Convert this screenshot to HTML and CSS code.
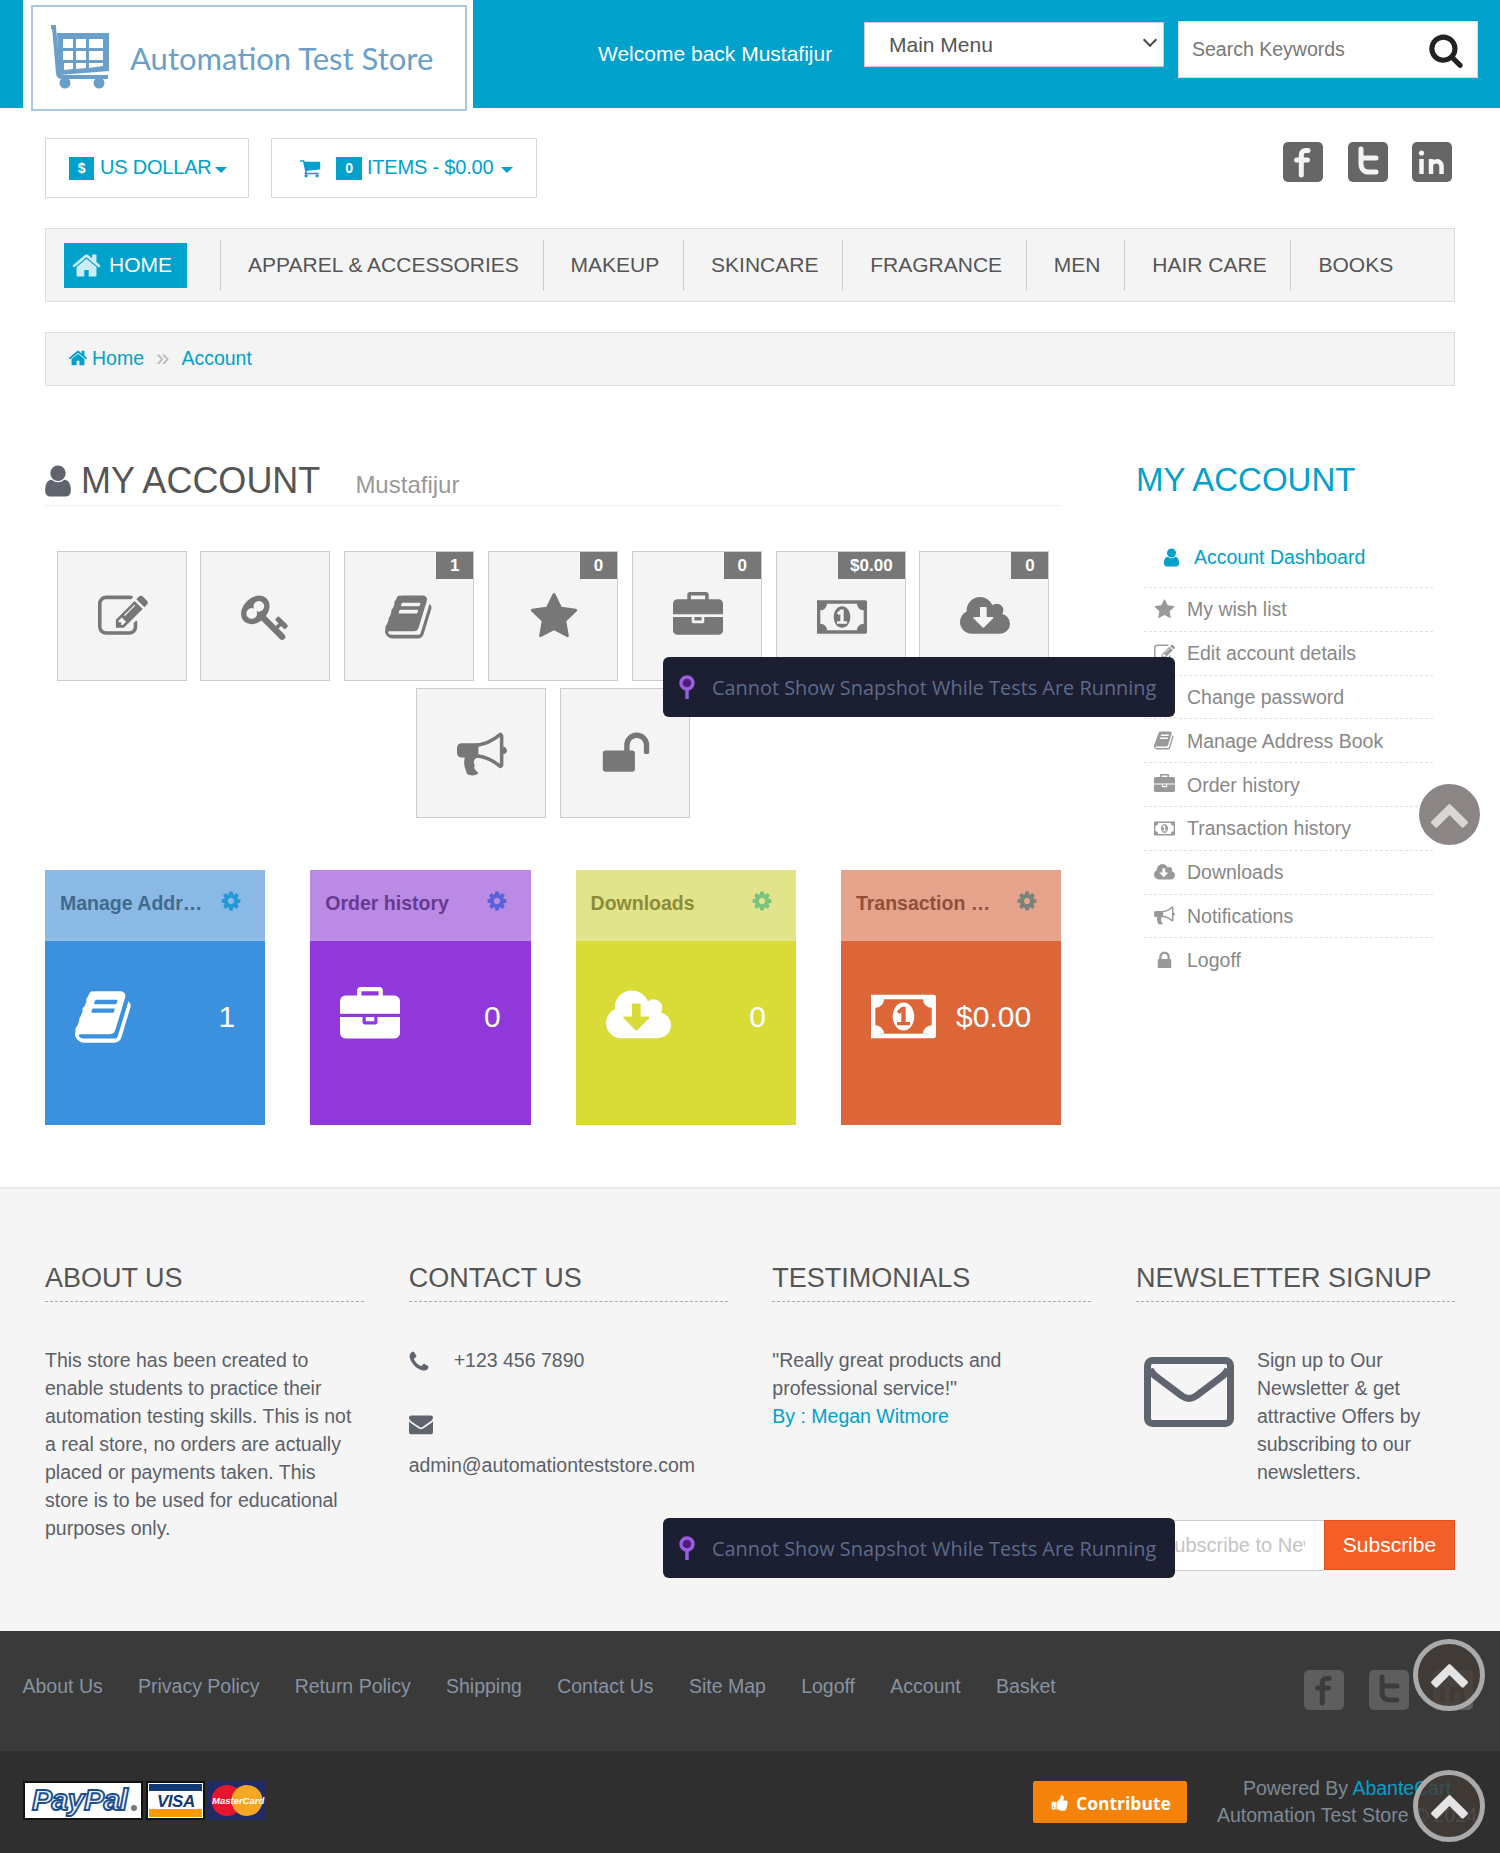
FILE: index.html
```html
<!DOCTYPE html>
<html lang="en">
<head>
<meta charset="utf-8">
<title>My Account</title>
<link rel="stylesheet" href="styles.css">
</head>
<body>
<svg class="defs" aria-hidden="true">
  <symbol id="i-star" viewBox="0 0 1792 1792"><path d="M1728 647q0 22-26 48l-363 354 86 500q1 7 1 20 0 21-10.500 35.500t-30.500 14.500q-19 0-40-12l-449-236-449 236q-22 12-40 12-21 0-31.500-14.500t-10.500-35.500q0-6 2-20l86-500-364-354q-25-27-25-48 0-37 56-46l502-73 225-455q19-41 49-41t49 41l225 455 502 73q56 9 56 46z"/></symbol>
  <symbol id="i-user" viewBox="0 0 1792 1792"><path d="M1536 1399q0 109-62.500 187t-150.500 78h-854q-88 0-150.500-78t-62.500-187q0-85 8.500-160.500t31.500-152 58.500-131 94-89 134.500-34.500q131 128 313 128t313-128q76 0 134.500 34.500t94 89 58.500 131 31.500 152 8.500 160.500zm-256-887q0 159-112.500 271.500t-271.500 112.500-271.500-112.500-112.500-271.500 112.500-271.500 271.500-112.500 271.500 112.500 112.500 271.500z"/></symbol>
  <symbol id="i-home" viewBox="0 0 1792 1792"><path d="M1472 992v480q0 26-19 45t-45 19h-384v-384h-256v384h-384q-26 0-45-19t-19-45v-480q0-1 .5-3t.5-3l575-474 575 474q1 2 1 6zm223-69l-62 74q-8 9-21 11h-3q-13 0-21-7l-692-577-692 577q-12 8-24 7-13-2-21-11l-62-74q-8-10-7-23.500t11-21.500l719-599q32-26 76-26t76 26l244 204v-195q0-14 9-23t23-9h192q14 0 23 9t9 23v408l219 182q10 8 11 21.500t-7 23.500z"/></symbol>
  <symbol id="i-search" viewBox="0 0 1792 1792"><path d="M1216 832q0-185-131.500-316.500t-316.500-131.500-316.500 131.500-131.500 316.500 131.500 316.500 316.500 131.500 316.500-131.500 131.500-316.500zm512 832q0 52-38 90t-90 38q-54 0-90-38l-343-342q-179 124-399 124-143 0-273.500-55.500t-225-150-150-225-55.500-273.500 55.500-273.500 150-225 225-150 273.500-55.500 273.500 55.500 225 150 150 225 55.500 273.500q0 220-124 399l343 343q37 37 37 90z"/></symbol>
  <symbol id="i-cart" viewBox="0 0 1792 1792"><path d="M704 1536q0 52-38 90t-90 38-90-38-38-90 38-90 90-38 90 38 38 90zm896 0q0 52-38 90t-90 38-90-38-38-90 38-90 90-38 90 38 38 90zm128-1088v512q0 24-16.500 42.500t-40.500 21.500l-1044 122q13 60 13 70 0 16-24 64h920q26 0 45 19t19 45-19 45-45 19h-1024q-26 0-45-19t-19-45q0-11 8-31.500t16-36 21.500-40 15.500-29.500l-177-823h-204q-26 0-45-19t-19-45 19-45 45-19h256q16 0 28.500 6.500t19.500 15.500 13 24.500 8 26 5.500 29.500 4.500 26h1201q26 0 45 19t19 45z"/></symbol>
  <symbol id="i-cog" viewBox="0 0 1792 1792"><path d="M1152 896q0-106-75-181t-181-75-181 75-75 181 75 181 181 75 181-75 75-181zm512-109v222q0 12-8 23t-20 13l-185 28q-19 54-39 91 35 50 107 138 10 12 10 25t-9 23q-27 37-99 108t-94 71q-12 0-26-9l-138-108q-44 23-91 38-16 136-29 186-7 28-36 28h-222q-14 0-24.500-8.500t-11.500-21.500l-28-184q-49-16-90-37l-141 107q-10 9-25 9-14 0-25-11-126-114-165-168-7-10-7-23 0-12 8-23 15-21 51-66.500t54-70.500q-27-50-41-99l-183-27q-13-2-21-12.500t-8-23.500v-222q0-12 8-23t19-13l186-28q14-46 39-92-40-57-107-138-10-12-10-24 0-10 9-23 26-36 98.500-107.500t94.500-71.500q13 0 26 10l138 107q44-23 91-38 16-136 29-186 7-28 36-28h222q14 0 24.500 8.500t11.500 21.500l28 184q49 16 90 37l142-107q9-9 24-9 13 0 25 10 129 119 165 170 7 8 7 22 0 12-8 23-15 21-51 66.500t-54 70.500q26 50 41 98l183 28q13 2 21 12.500t8 23.500z"/></symbol>
  <symbol id="i-phone" viewBox="0 0 1792 1792"><path d="M1600 1240q0 27-10 70.500t-21 68.500q-21 50-122 106-94 51-186 51-27 0-53-3.500t-57.500-12.500-47-14.500-55.500-20.500-49-18q-98-35-175-83-127-79-264-216t-216-264q-48-77-83-175-3-9-18-49t-20.500-55.500-14.500-47-12.500-57.500-3.500-53q0-92 51-186 56-101 106-122 25-11 68.500-21t70.500-10q14 0 21 3 18 6 53 76 11 19 30 54t35 63.500 31 53.500q3 4 17.500 25t21.500 35.500 7 28.500q0 20-28.500 50t-62 55-62 53-28.500 46q0 9 5 22.500t8.500 20.500 14 24 11.500 19q76 137 174 235t235 174q2 1 19 11.500t24 14 20.500 8.500 22.500 5q18 0 46-28.500t53-62 55-62 50-28.500q14 0 28.500 7t35.500 21.500 25 17.500q25 15 53.500 31t63.500 35 54 30q70 35 76 53 3 7 3 21z"/></symbol>
  <symbol id="i-envelope" viewBox="0 0 1792 1792"><path d="M1792 710v794q0 66-47 113t-113 47h-1472q-66 0-113-47t-47-113v-794q44 49 101 87 362 246 497 345 57 42 92.500 65.500t94.500 48 110 24.500h2q51 0 110-24.500t94.500-48 92.500-65.500q170-123 498-345 57-39 100-87zm0-294q0 79-49 151t-122 123q-376 261-468 325-10 7-42.500 30.500t-54 38-52 32.500-57.500 27-50 9h-2q-23 0-50-9t-57.500-27-52-32.500-54-38-42.500-30.500q-91-64-262-182.500t-205-142.500q-62-42-117-115.500t-55-136.500q0-78 41.500-130t118.500-52h1472q65 0 112.500 47t47.500 113z"/></symbol>
  <symbol id="i-thumb" viewBox="0 0 1792 1792"><path d="M320 1344q0-26-19-45t-45-19q-27 0-45.500 19t-18.500 45q0 27 18.500 45.500t45.500 18.500q26 0 45-18.500t19-45.500zm160-512v640q0 26-19 45t-45 19h-288q-26 0-45-19t-19-45v-640q0-26 19-45t45-19h288q26 0 45 19t19 45zm1184 0q0 86-55 149 15 44 15 76 3 76-43 137 17 56 0 117-15 57-54 94 9 112-49 181-64 76-197 78h-129q-66 0-144-15.500t-121.500-29-120.500-39.500q-123-43-158-44-26-1-45-19.500t-19-44.500v-641q0-25 18-43.500t43-20.500q24-2 76-59t101-121q68-87 101-120 18-18 31-48t17.500-48.500 13.500-60.500q7-39 12.500-61t19.500-52 34-50q19-19 45-19 46 0 82.500 10.500t60 26 40 40.500 24 45 12 50 5 45 .5 39q0 38-9.500 76t-19 60-27.500 56q-3 6-10 18t-11 22-8 24h277q78 0 135 57t57 135z"/></symbol>
  <symbol id="i-lock" viewBox="0 0 1792 1792"><path d="M640 768h512v-192q0-106-75-181t-181-75-181 75-75 181v192zm832 96v576q0 40-28 68t-68 28h-960q-40 0-68-28t-28-68v-576q0-40 28-68t68-28h32v-192q0-184 132-316t316-132 316 132 132 316v192h32q40 0 68 28t28 68z"/></symbol>
  <symbol id="i-unlock" viewBox="0 0 1792 1792"><path d="M1728 576v256q0 26-19 45t-45 19h-64q-26 0-45-19t-19-45v-256q0-106-75-181t-181-75-181 75-75 181v192h96q40 0 68 28t28 68v576q0 40-28 68t-68 28h-960q-40 0-68-28t-28-68v-576q0-40 28-68t68-28h672v-192q0-185 131.500-316.500t316.500-131.500 316.500 131.500 131.500 316.500z"/></symbol>
  <symbol id="i-bullhorn" viewBox="0 0 1792 1792"><path d="M1664 640q53 0 90.500 37.500t37.500 90.500-37.500 90.500-90.500 37.500v384q0 52-38 90t-90 38q-417-347-812-380-58 19-91 66t-31 100.500 40 92.500q-20 33-23 65.500t6 58 33.500 55 48 50 61.500 50.500q-29 58-111.500 83t-168.500 11.500-132-55.500q-7-23-29.500-87.500t-32-94.500-23-89-15-101 3.500-98.500 22-110.500h-122q-66 0-113-47t-47-113v-192q0-66 47-113t113-47h480q435 0 896-384 52 0 90 38t38 90v384zm-128 604v-954q-394 302-768 343v270q377 42 768 341z"/></symbol>
  <symbol id="i-briefcase" viewBox="0 0 1792 1792"><path d="M640 256h512v-128h-512v128zm1152 640v480q0 66-47 113t-113 47h-1472q-66 0-113-47t-47-113v-480h672v160q0 26 19 45t45 19h320q26 0 45-19t19-45v-160h672zm-768 0v128h-256v-128h256zm768-480v384h-1792v-384q0-66 47-113t113-47h352v-160q0-40 28-68t68-28h576q40 0 68 28t28 68v160h352q66 0 113 47t47 113z"/></symbol>
  <symbol id="i-money" viewBox="-64 0 1920 1792"><path d="M704 1152h384v-96h-128v-448h-114l-148 137 77 80q42-37 55-57h2v288h-128v96zm512-256q0 70-21 142t-59.500 134-101.500 101-138 39-138-39-101.500-101-59.500-134-21-142 21-142 59.500-134 101.500-101 138-39 138 39 101.500 101 59.500 134 21 142zm512 256v-512q-106 0-181-75t-75-181h-1152q0 106-75 181t-181 75v512q106 0 181 75t75 181h1152q0-106 75-181t181-75zm128-832v1152q0 26-19 45t-45 19h-1856q-26 0-45-19t-19-45v-1152q0-26 19-45t45-19h1856q26 0 45 19t19 45z"/></symbol>
  <symbol id="i-cloud" viewBox="0 0 1920 1792"><path d="M1280 928q0-14-9-23t-23-9h-224v-352q0-13-9.500-22.500t-22.500-9.500h-192q-13 0-22.500 9.500t-9.500 22.500v352h-224q-13 0-22.500 9.500t-9.500 22.500q0 14 9 23l352 352q9 9 23 9t23-9l351-351q10-12 10-24zm640 224q0 159-112.500 271.500t-271.500 112.500h-1088q-185 0-316.500-131.500t-131.500-316.500q0-130 70-240t188-165q-2-30-2-43 0-212 150-362t362-150q156 0 285.500 87t188.500 231q71-62 166-62 106 0 181 75t75 181q0 76-41 138 130 31 213.500 135.500t83.500 238.500z"/></symbol>
  <symbol id="i-book" viewBox="0 0 1792 1792"><path d="M1639 478q40 57 18 129l-275 906q-19 64-76.500 107.500t-122.500 43.500h-923q-77 0-148.500-53.500t-99.500-131.500q-24-67-2-127 0-4 3-27t4-37q1-8-3-21.500t-3-19.500q2-11 8-21t16.500-23.500 16.500-23.500q23-38 45-91.500t30-91.500q3-10 .5-30t-.5-28q3-11 17-28t17-23q21-36 42-92t25-90q1-9-2.500-32t.5-28q4-13 22-30.500t22-22.500q19-26 42.500-84.500t27.500-96.500q1-8-3-25.500t-2-26.500q2-8 9-18t18-23 17-21q8-12 16.500-30.500t15-35 16-36 19.500-32 26.500-23.500 36-11.500 47.500 5.500l-1 3q38-9 51-9h761q74 0 114 56t18 130l-274 906q-36 119-71.500 153.500t-128.500 34.500h-869q-27 0-38 15-11 16-1 43 24 70 144 70h923q29 0 56-15.500t35-41.500l300-987q7-22 5-57 38 15 59 43zm-1064 2q-4 13 2 22.500t20 9.500h608q13 0 25.500-9.500t16.500-22.500l21-64q4-13-2-22.500t-20-9.500h-608q-13 0-25.500 9.500t-16.500 22.500zm-83 256q-4 13 2 22.500t20 9.500h608q13 0 25.500-9.500t16.500-22.500l21-64q4-13-2-22.500t-20-9.500h-608q-13 0-25.500 9.500t-16.500 22.500z"/></symbol>
  <symbol id="i-key" viewBox="0 0 1792 1792"><path d="M832 512q0-80-56-136t-136-56-136 56-56 136q0 42 19 83-41-19-83-19-80 0-136 56t-56 136 56 136 136 56 136-56 56-136q0-42-19-83 41 19 83 19 80 0 136-56t56-136zm851 704q0 17-49 66t-66 49q-9 0-28.500-16t-36.500-33-38.500-40-24.500-26l-96 96 220 220q28 28 28 68 0 42-39 81t-81 39q-40 0-68-28l-671-671q-176 131-365 131-163 0-265.500-102.500t-102.500-265.500q0-160 95-313t248-248 313-95q163 0 265.500 102.500t102.500 265.500q0 189-131 365l355 355 96-96q-3-3-26-24.500t-40-38.500-33-36.500-16-28.500q0-17 49-66t66-49q13 0 23 10 6 6 46 44.500t82 79.500 86.500 86 73 78 28.500 41z"/></symbol>
  <symbol id="i-edit" viewBox="0 0 1792 1792"><path d="M888 1184l116-116-152-152-116 116v56h96v96h56zm440-720q-16-16-33 1l-350 350q-17 17-1 33t33-1l350-350q17-17 1-33zm80 594v190q0 119-84.500 203.500t-203.500 84.500h-832q-119 0-203.500-84.500t-84.500-203.500v-832q0-119 84.500-203.500t203.500-84.500h832q63 0 117 25 15 7 18 23 3 17-9 29l-49 49q-14 14-32 8-23-6-45-6h-832q-66 0-113 47t-47 113v832q0 66 47 113t113 47h832q66 0 113-47t47-113v-126q0-13 9-22l64-64q15-15 35-7t20 29zm-96-738l288 288-672 672h-288v-288zm444 132l-92 92-288-288 92-92q28-28 68-28t68 28l152 152q28 28 28 68t-28 68z"/></symbol>
  <symbol id="i-chevron" viewBox="0 0 1792 1792"><path d="M1683 1331l-166 165q-19 19-45 19t-45-19l-531-531-531 531q-19 19-45 19t-45-19l-166-165q-19-19-19-45.500t19-45.500l742-741q19-19 45-19t45 19l742 741q19 19 19 45.500t-19 45.500z"/></symbol>
  <symbol id="i-fb" viewBox="0 0 40 40"><rect width="40" height="40" rx="5"/><path class="soc-ink" d="M25 8.500h-2.500c-2.600 0-4.200 1.700-4.200 4.400V33M13.500 18h11"/></symbol>
  <symbol id="i-tw" viewBox="0 0 40 40"><rect width="40" height="40" rx="5"/><path class="soc-ink" d="M13 7v15c0 5 3 8 8 8h7M13 16h15"/></symbol>
  <symbol id="i-in" viewBox="0 0 40 40"><rect width="40" height="40" rx="5"/><path class="soc-ink soc-thin" d="M9.500 17v15M19 32V17M19 23c1-4 10-6 10.500 1v8"/><circle class="soc-dot" cx="9.500" cy="11" r="2.600"/></symbol>
</svg>

<header class="topbar">
  <div class="logo-wrap">
    <a class="logo" href="#">
      <svg class="logo-cart" viewBox="0 0 60 64" aria-hidden="true">
        <path class="cart-line" d="M1 2h3l4 46c.3 3 2 4 4 4h46"/>
        <path class="cart-body" d="M7 8h52v38L9 50z"/>
        <path class="cart-grid" d="M13 14h10v9H13zM26 14h10v9H26zM39 14h14v9H39zM13 26h10v9H13zM26 26h10v9H26zM39 26h14v9H39zM14 38h9v6l-9 1zM26 38h10v5l-10 1zM39 38h14v3l-14 2z"/>
        <circle class="cart-body" cx="15" cy="58" r="5.500"/><circle class="cart-body" cx="49" cy="58" r="5.500"/>
      </svg>
      <span class="logo-text">Automation Test Store</span>
    </a>
  </div>
  <div class="topbar-right">
    <span class="welcome">Welcome back Mustafijur</span>
    <div class="menu-wrap"><select class="main-menu"><option>Main Menu</option></select></div>
    <form class="search">
      <input class="search-input" type="text" placeholder="Search Keywords">
      <svg class="ico search-ico"><use href="#i-search"/></svg>
    </form>
  </div>
</header>

<div class="page">
  <div class="tools">
    <a class="tool tool-cur" href="#"><span class="tag">$</span><span class="tool-text">US DOLLAR</span><span class="caret caret-tight"></span></a>
    <a class="tool tool-cart" href="#"><svg class="ico tool-cart-ico"><use href="#i-cart"/></svg><span class="tag tag-wide">0</span><span class="tool-text">ITEMS - $0.00</span><span class="caret"></span></a>
    <div class="social">
      <svg class="soc-ico"><use href="#i-fb"/></svg>
      <svg class="soc-ico"><use href="#i-tw"/></svg>
      <svg class="soc-ico"><use href="#i-in"/></svg>
    </div>
  </div>

  <nav class="nav">
    <a class="nav-home" href="#"><svg class="ico nav-home-ico"><use href="#i-home"/></svg>HOME</a>
    <a class="nav-item" href="#">APPAREL &amp; ACCESSORIES</a>
    <a class="nav-item" href="#">MAKEUP</a>
    <a class="nav-item" href="#">SKINCARE</a>
    <a class="nav-item" href="#">FRAGRANCE</a>
    <a class="nav-item" href="#">MEN</a>
    <a class="nav-item" href="#">HAIR CARE</a>
    <a class="nav-item nav-last" href="#">BOOKS</a>
  </nav>

  <div class="crumbs">
    <svg class="ico crumb-ico"><use href="#i-home"/></svg><a href="#">Home</a><span class="crumb-sep">»</span><a href="#">Account</a>
  </div>

  <div class="main">
    <section class="content">
      <h1 class="title"><svg class="ico title-ico"><use href="#i-user"/></svg><span class="title-text">MY ACCOUNT</span><small class="title-sub">Mustafijur</small></h1>
      <div class="tiles">
        <a class="tile" href="#"><svg class="ico"><use href="#i-edit"/></svg></a>
        <a class="tile" href="#"><svg class="ico"><use href="#i-key"/></svg></a>
        <a class="tile" href="#"><span class="badge">1</span><svg class="ico"><use href="#i-book"/></svg></a>
        <a class="tile" href="#"><span class="badge">0</span><svg class="ico"><use href="#i-star"/></svg></a>
        <a class="tile" href="#"><span class="badge">0</span><svg class="ico"><use href="#i-briefcase"/></svg></a>
        <a class="tile" href="#"><span class="badge">$0.00</span><svg class="ico"><use href="#i-money"/></svg></a>
        <a class="tile" href="#"><span class="badge">0</span><svg class="ico"><use href="#i-cloud"/></svg></a>
        <a class="tile" href="#"><svg class="ico"><use href="#i-bullhorn"/></svg></a>
        <a class="tile" href="#"><svg class="ico"><use href="#i-unlock"/></svg></a>
      </div>
      <div class="cards">
        <div class="card card-blue">
          <div class="card-head"><span class="card-title">Manage Address Book</span><svg class="ico card-cog"><use href="#i-cog"/></svg></div>
          <div class="card-body"><svg class="ico card-ico"><use href="#i-book"/></svg><span class="card-num">1</span></div>
        </div>
        <div class="card card-purple">
          <div class="card-head"><span class="card-title">Order history</span><svg class="ico card-cog"><use href="#i-cog"/></svg></div>
          <div class="card-body"><svg class="ico card-ico"><use href="#i-briefcase"/></svg><span class="card-num">0</span></div>
        </div>
        <div class="card card-yellow">
          <div class="card-head"><span class="card-title">Downloads</span><svg class="ico card-cog"><use href="#i-cog"/></svg></div>
          <div class="card-body"><svg class="ico card-ico card-ico-wide"><use href="#i-cloud"/></svg><span class="card-num">0</span></div>
        </div>
        <div class="card card-orange">
          <div class="card-head"><span class="card-title">Transaction history</span><svg class="ico card-cog"><use href="#i-cog"/></svg></div>
          <div class="card-body"><svg class="ico card-ico card-ico-wide"><use href="#i-money"/></svg><span class="card-num">$0.00</span></div>
        </div>
      </div>
    </section>

    <aside class="side">
      <h2 class="side-title">MY ACCOUNT</h2>
      <ul class="side-list">
        <li class="side-item side-active"><svg class="ico"><use href="#i-user"/></svg><a href="#">Account Dashboard</a></li>
        <li class="side-item"><svg class="ico"><use href="#i-star"/></svg><a href="#">My wish list</a></li>
        <li class="side-item"><svg class="ico"><use href="#i-edit"/></svg><a href="#">Edit account details</a></li>
        <li class="side-item"><svg class="ico"><use href="#i-key"/></svg><a href="#">Change password</a></li>
        <li class="side-item"><svg class="ico"><use href="#i-book"/></svg><a href="#">Manage Address Book</a></li>
        <li class="side-item"><svg class="ico"><use href="#i-briefcase"/></svg><a href="#">Order history</a></li>
        <li class="side-item"><svg class="ico"><use href="#i-money"/></svg><a href="#">Transaction history</a></li>
        <li class="side-item"><svg class="ico"><use href="#i-cloud"/></svg><a href="#">Downloads</a></li>
        <li class="side-item"><svg class="ico"><use href="#i-bullhorn"/></svg><a href="#">Notifications</a></li>
        <li class="side-item"><svg class="ico"><use href="#i-lock"/></svg><a href="#">Logoff</a></li>
      </ul>
    </aside>
  </div>
</div>

<footer class="footer">
  <div class="foot-cols">
    <section class="foot-col">
      <h3 class="foot-head">ABOUT US</h3>
      <p class="foot-text">This store has been created to enable students to practice their automation testing skills. This is not a real store, no orders are actually placed or payments taken. This store is to be used for educational purposes only.</p>
    </section>
    <section class="foot-col">
      <h3 class="foot-head">CONTACT US</h3>
      <div class="contact-row"><svg class="ico contact-ico contact-phone"><use href="#i-phone"/></svg><span>+123 456 7890</span></div>
      <svg class="ico contact-ico contact-mail"><use href="#i-envelope"/></svg>
      <div class="contact-mail-text">admin@automationteststore.com</div>
    </section>
    <section class="foot-col">
      <h3 class="foot-head">TESTIMONIALS</h3>
      <p class="foot-text">"Really great products and professional service!"<br><a href="#">By : Megan Witmore</a></p>
    </section>
    <section class="foot-col">
      <h3 class="foot-head">NEWSLETTER SIGNUP</h3>
      <div class="news">
        <svg class="news-ico" viewBox="0 0 90 70" aria-hidden="true"><rect class="news-line" x="3.500" y="3.500" width="83" height="63" rx="5"/><path class="news-line" d="M6 12c2 5 4 6 8 9l24 18c5 3.500 9 3.500 14 0l24-18c4-3 6-4 8-9"/></svg>
        <p class="foot-text news-text">Sign up to Our Newsletter &amp; get attractive Offers by subscribing to our newsletters.</p>
      </div>
      <form class="sub">
        <input class="sub-input" type="text" placeholder="Subscribe to Newsletter">
        <button class="sub-btn" type="button">Subscribe</button>
      </form>
    </section>
  </div>

  <div class="foot-links">
    <a href="#">About Us</a><a href="#">Privacy Policy</a><a href="#">Return Policy</a><a href="#">Shipping</a><a href="#">Contact Us</a><a href="#">Site Map</a><a href="#">Logoff</a><a href="#">Account</a><a href="#">Basket</a>
    <div class="social social-dark">
      <svg class="soc-ico"><use href="#i-fb"/></svg>
      <svg class="soc-ico"><use href="#i-tw"/></svg>
      <svg class="soc-ico"><use href="#i-in"/></svg>
    </div>
  </div>

  <div class="foot-bottom">
    <div class="pay">
      <svg class="pay-card pay-paypal" viewBox="0 0 120 39" aria-hidden="true"><rect class="pay-frame" x="1" y="1" width="118" height="37"/><text class="pay-pp" x="9" y="29">PayPal</text><circle class="pay-dot" cx="111" cy="27" r="3"/></svg>
      <svg class="pay-card pay-visa" viewBox="0 0 59 39" aria-hidden="true"><rect class="pay-frame" x="1" y="1" width="57" height="37"/><rect class="pay-navy" x="3" y="3" width="53" height="7"/><rect class="pay-amber" x="3" y="28" width="53" height="8"/><text class="pay-v" x="11" y="25.500">VISA</text></svg>
      <svg class="pay-card pay-mc" viewBox="0 0 58 39" aria-hidden="true"><rect class="pay-mcbg" width="58" height="39"/><circle class="pay-red" cx="19" cy="19.500" r="15.500"/><circle class="pay-orange" cx="39" cy="19.500" r="15.500"/><text class="pay-m" x="4" y="23">MasterCard</text></svg>
    </div>
    <a class="contribute" href="#"><svg class="ico contribute-ico"><use href="#i-thumb"/></svg>Contribute</a>
    <div class="powered">Powered By <a href="#">AbanteCart</a><br>Automation Test Store © 2024</div>
  </div>
</footer>

<div class="toast toast-a"><svg class="toast-pin" viewBox="0 0 16 24" aria-hidden="true"><circle class="pin-head" cx="8" cy="8" r="6"/><path class="pin-stem" d="M8 14v9"/></svg>Cannot Show Snapshot While Tests Are Running</div>
<div class="toast toast-b"><svg class="toast-pin" viewBox="0 0 16 24" aria-hidden="true"><circle class="pin-head" cx="8" cy="8" r="6"/><path class="pin-stem" d="M8 14v9"/></svg>Cannot Show Snapshot While Tests Are Running</div>

<a class="up up-plain" href="#"><svg class="ico"><use href="#i-chevron"/></svg></a>
<a class="up up-ring up-one" href="#"><svg class="ico"><use href="#i-chevron"/></svg></a>
<a class="up up-ring up-two" href="#"><svg class="ico"><use href="#i-chevron"/></svg></a>
</body>
</html>
```

FILE: styles.css
```css
* { box-sizing: border-box; }
html, body { margin: 0; padding: 0; }
body {
  position: relative;
  width: 1500px;
  min-height: 1853px;
  background: #fff;
  color: #555;
  font: 19.500px/28px "Liberation Sans", Arial, sans-serif;
}
a { color: #00a1cb; text-decoration: none; }
h1, h2, h3, p, ul { margin: 0; padding: 0; font-weight: 400; }
ul { list-style: none; }
.defs { display: none; }
.ico { display: block; width: 1em; height: 1em; fill: currentColor; flex: none; }

/* top bar */
.topbar { display: flex; height: 108px; padding-left: 23px; background: #00a1cb; }
.logo-wrap { width: 450px; height: 108px; padding: 5px 6px 0 8px; background: #fff; flex: none; }
.logo {
  display: flex;
  align-items: center;
  height: 106px;
  padding: 0 0 2px 17px;
  background: #fff;
  border: 2px solid #a9c8e6;
  position: relative;
}
.logo-cart { width: 60px; height: 64px; margin-right: 20px; }
.cart-line { fill: none; stroke: #6a9fca; stroke-width: 4; }
.cart-body { fill: #6a9fca; }
.cart-grid { fill: #fff; }
.logo-text { margin-top: 2px; color: #6a9fca; font: 31px/40px "Lato", "Open Sans", sans-serif; }
.topbar-right { display: flex; flex: 1; align-items: flex-start; padding-left: 125px; }
.welcome { margin-top: 40px; color: #fff; font-size: 21px; width: 266px; flex: none; }
.menu-wrap { position: relative; margin-top: 22px; }
.menu-wrap::after {
  content: "";
  position: absolute;
  top: 13px;
  right: 9px;
  width: 8px;
  height: 8px;
  border-right: 2px solid #444;
  border-bottom: 2px solid #444;
  transform: rotate(45deg);
  pointer-events: none;
}
.main-menu {
  display: block;
  width: 300px;
  height: 45px;
  padding-left: 24px;
  border: 1px solid #ccc;
  border-radius: 0;
  background: #fff;
  color: #555;
  font: 21px "Liberation Sans", Arial, sans-serif;
  appearance: none;
}
.search {
  display: flex;
  align-items: center;
  width: 300px;
  height: 57px;
  margin: 21px 0 0 14px;
  background: #fff;
  border: 1px solid #ddd;
}
.search-input {
  flex: 1;
  min-width: 0;
  height: 100%;
  padding: 0 0 0 13px;
  border: 0;
  outline: 0;
  background: transparent;
  font: 19.500px "Liberation Sans", Arial, sans-serif;
}
.search-input::placeholder { color: #777; opacity: 1; }
.search-ico { margin-right: 13px; font-size: 36px; color: #222; }

/* tools */
.page { padding: 30px 45px 0; }
.tools { display: flex; align-items: flex-start; height: 60px; }
.tool {
  display: flex;
  align-items: center;
  height: 60px;
  margin-right: 22px;
  border: 1px solid #d5d5d5;
  font-size: 20px;
  letter-spacing: -.2px;
}
.tool-text { margin-top: -2px; }
.tool-cur { width: 204px; padding-left: 23px; }
.tool-cart { width: 266px; padding-left: 27px; }
.tool-cart-ico { margin-right: 15px; font-size: 22px; }
.tag {
  display: flex;
  align-items: center;
  justify-content: center;
  width: 25px;
  height: 23px;
  margin-right: 6px;
  background: #00a1cb;
  color: #fff;
  font-size: 14px;
  font-weight: 700;
}
.tag-wide { width: 26px; margin-right: 5px; }
.caret {
  width: 0;
  height: 0;
  margin: 3px 0 0 8px;
  border: 6px solid transparent;
  border-top-color: #00a1cb;
  border-bottom: 0;
}
.caret-tight { margin-left: 3px; }
.social { display: flex; gap: 24.500px; margin-left: auto; padding-top: 4px; margin-right: 3px; }
.soc-ico { width: 40px; height: 40px; fill: #666; --soc-ink: #f4f4f4; }
.soc-ink { fill: none; stroke: var(--soc-ink); stroke-width: 5; stroke-linecap: round; stroke-linejoin: round; }
.soc-thin { stroke-width: 4.500; stroke-linecap: butt; }
.soc-dot { fill: var(--soc-ink); }

/* nav */
.nav {
  display: flex;
  align-items: center;
  height: 74px;
  margin-top: 30px;
  padding: 0 0 0 18px;
  background: #f4f4f4;
  border: 1px solid #ddd;
}
.nav-home {
  display: flex;
  align-items: center;
  width: 123px;
  height: 45px;
  margin-right: 33px;
  padding-left: 7px;
  background: #00a1cb;
  color: #fff;
  font-size: 21px;
}
.nav-home-ico { margin-right: 7px; font-size: 31px; color: #cdeef7; }
.nav-item {
  display: flex;
  align-items: center;
  height: 51px;
  padding: 0 23.800px 0 27px;
  border-left: 1px solid #ccc;
  color: #555;
  font-size: 21px;
}

/* breadcrumb */
.crumbs {
  display: flex;
  align-items: center;
  height: 54px;
  margin-top: 30px;
  padding: 0 0 2px 22px;
  background: #f4f4f4;
  border: 1px solid #ddd;
}
.crumb-ico { margin-right: 4px; font-size: 20px; color: #00a1cb; }
.crumb-sep { margin: 0 12px; color: #bbb; font-size: 24px; }

/* main */
.main { display: flex; padding-top: 71px; }
.content { width: 1016px; flex: none; }
.title {
  display: flex;
  align-items: baseline;
  height: 49px;
  border-bottom: 1px solid #eee;
  color: #555;
  font-size: 36px;
  line-height: 48px;
}
.title-ico { align-self: center; margin: 0 0 0 -5px; font-size: 36px; color: #5f646e; }
.title-text { margin-left: 5px; }
.title-sub { margin-left: 35px; color: #999; font-size: 24px; }
.tiles { display: flex; flex-wrap: wrap; justify-content: center; gap: 7px 13.800px; margin-top: 45px; }
.tile {
  position: relative;
  display: flex;
  align-items: center;
  justify-content: center;
  width: 130px;
  height: 130px;
  padding: 2px 0 0 2px;
  background: #f4f4f4;
  border: 1px solid #ccc;
  color: #777;
  font-size: 50px;
}
.badge {
  position: absolute;
  top: 0;
  right: 0;
  min-width: 37px;
  height: 27px;
  padding: 0 12px;
  background: #777;
  color: #fff;
  font-size: 17px;
  font-weight: 700;
  line-height: 27px;
  text-align: center;
}
.cards { display: flex; gap: 45px; margin-top: 52px; }
.card { width: 220.300px; height: 255px; flex: none; }
.card-head {
  display: flex;
  align-items: center;
  height: 71px;
  padding: 0 23px 2px 15px;
  border-bottom: 3px solid;
  font-size: 19.500px;
  font-weight: 700;
}
.card-title { flex: 1; min-width: 0; margin-right: 15px; overflow: hidden; white-space: nowrap; text-overflow: ellipsis; }
.card-cog { margin-top: -4px; font-size: 22px; }
.card-body { display: flex; align-items: center; justify-content: space-between; height: 184px; padding: 0 30px 33px; color: #fff; font-size: 30px; }
.card-ico { font-size: 60px; }
.card-ico-wide { font-size: 65px; }
.card-blue .card-body { background: #3b91dd; }
.card-blue .card-head { background: #8ab9e5; border-color: #91bfea; color: #3f6a8e; }
.card-blue .card-cog { color: #2598d8; }
.card-purple .card-body { background: #9038d9; }
.card-purple .card-head { background: #bb8ae5; border-color: #bf90e8; color: #673a91; }
.card-purple .card-cog { color: #5a60d8; }
.card-yellow .card-body { background: #d9dc37; }
.card-yellow .card-head { background: #e2e48c; border-color: #e5e790; color: #8c8c38; }
.card-yellow .card-cog { color: #78c47e; }
.card-orange .card-body { background: #dc6637; }
.card-orange .card-head { background: #e5a38c; border-color: #e8a58c; color: #8f4f3a; }
.card-orange .card-cog { color: #76827a; }

/* sidebar */
.side { width: 296px; margin-left: 76px; flex: none; }
.side-title { margin: -1px 0 0 -1px; color: #00a1cb; font-size: 33px; line-height: 48px; }
.side-list { margin: 29px 0 0 7px; }
.side-item {
  display: flex;
  align-items: center;
  height: 43.800px;
  border-bottom: 1px dashed #e2e2e2;
  color: #888;
  font-size: 21px;
  padding-left: 10px;
}
.side-item:last-child { border-bottom: 0; }
.side-item a { margin-left: 12px; color: #888; font-size: 19.500px; }
.side-item .ico { color: #999; }
.side-active { height: 55px; padding: 0 0 6px 17px; }
.side-active .ico, .side-item.side-active a { color: #00a1cb; }

/* footer */
.footer { margin-top: 62px; }
.foot-cols {
  display: flex;
  gap: 44.670px;
  height: 444px;
  padding: 70px 45px 0;
  background: #f5f5f5;
  border-top: 2px solid #e8e8e8;
}
.foot-col { width: 319px; flex: none; color: #5b6068; }
.foot-head {
  height: 43px;
  border-bottom: 1px dashed #aaa;
  color: #555;
  font-size: 27px;
  line-height: 38px;
}
.foot-text { margin-top: 44px; color: #5b6068; line-height: 28px; }
.foot-text a { color: #00a1cb; }
.contact-row { display: flex; align-items: center; margin-top: 44px; color: #5b6068; }
.contact-ico { color: #5f646e; font-size: 24px; }
.contact-phone { margin: 4px 0 0 -2px; }
.contact-row span { margin-left: 23px; }
.contact-mail { margin-top: 38px; }
.contact-mail-text { margin-top: 15px; color: #5b6068; }
.news { display: flex; gap: 23px; padding-left: 8px; }
.news-ico { width: 90px; height: 70px; margin-top: 55px; flex: none; }
.news-line { fill: none; stroke: #5f646e; stroke-width: 7; stroke-linejoin: round; }
.news-text { flex: 1; }
.sub { display: flex; height: 51px; margin-top: 34px; }
.sub-input {
  flex: 1;
  min-width: 0;
  padding: 0 19px 0 24px;
  background: #fff;
  border: 1px solid #ccc;
  border-right: 0;
  outline: 0;
  font: 20px "Liberation Sans", Arial, sans-serif;
}
.sub-input::placeholder { color: #c4c4c4; opacity: 1; }
.sub-btn {
  width: 131px;
  height: 50px;
  padding: 0;
  background: #f45f28;
  border: 1px solid #e0521c;
  color: #fff;
  font: 21px "Liberation Sans", Arial, sans-serif;
}
.foot-links { display: flex; align-items: center; gap: 35.300px; height: 120px; padding: 0 26px 10px 22.500px; background: #3a3a3a; }
.foot-links a { color: #8793a1; }
.social-dark { padding-top: 8px; margin-right: 1px; }
.social-dark .soc-ico { fill: #5e5e5e; --soc-ink: #3c3c3c; }
.foot-bottom { display: flex; align-items: flex-start; height: 102px; padding: 30px 23px 0; background: #2f2f2f; }
.pay { display: flex; gap: 3px; }
.pay-card { display: block; height: 39px; }
.pay-paypal { width: 120px; }
.pay-visa { width: 59px; }
.pay-mc { width: 58px; }
.pay-frame { fill: #fff; stroke: #111; stroke-width: 2; }
.pay-pp { fill: #eef3f9; stroke: #1d4f8f; stroke-width: 1.900px; font: italic 700 30px "Liberation Sans", Arial, sans-serif; letter-spacing: -.5px; }
.pay-dot { fill: #777; }
.pay-navy { fill: #123a72; }
.pay-amber { fill: #f90; }
.pay-v { fill: #123a72; font: italic 700 17px "Liberation Sans", Arial, sans-serif; letter-spacing: -.5px; }
.pay-mcbg { fill: #1f2a66; }
.pay-red { fill: #e3172d; }
.pay-orange { fill: #f5a623; }
.pay-m { fill: #fff; font: italic 700 9.500px "Liberation Sans", Arial, sans-serif; }
.contribute {
  display: flex;
  align-items: center;
  width: 154px;
  height: 42px;
  margin-left: auto;
  padding: 2px 0 0 18px;
  background: #f5820a;
  border-radius: 2px;
  color: #fff;
  font: 700 17.500px/40px "Open Sans", sans-serif;
}
.contribute-ico { margin-right: 7px; font-size: 18px; }
.powered { width: 260px; margin: -6px 0 0 30px; color: #7e8a94; line-height: 27px; text-align: center; white-space: nowrap; }

/* overlays */
.toast {
  position: absolute;
  left: 663px;
  display: flex;
  align-items: center;
  width: 512px;
  height: 60px;
  padding-left: 16px;
  background: #1b1f31;
  border-radius: 6px;
  color: #5f6b8a;
  font: 19.900px "Open Sans", sans-serif;
  white-space: nowrap;
}
.toast-a { top: 657px; }
.toast-b { top: 1518px; }
.toast-pin { width: 16px; height: 24px; margin-right: 17px; }
.pin-head { fill: #4c1d7a; stroke: #9a5fe0; stroke-width: 3.500; }
.pin-stem { stroke: #9a5fe0; stroke-width: 3.500; stroke-linecap: round; }
.up { position: absolute; display: flex; align-items: center; justify-content: center; border-radius: 50%; }
.up-plain { left: 1419px; top: 784px; width: 61px; height: 61px; padding-bottom: 3px; background: #8b8685; color: #d9d6d5; font-size: 41px; }
.up-ring {
  left: 1413px;
  width: 72px;
  height: 72px;
  padding-bottom: 3px;
  background: rgba(68, 60, 56, .8);
  border: 5px solid #aaa;
  color: #e4e4e4;
  font-size: 41px;
}
.up-one { top: 1639px; }
.up-two { top: 1770px; }
```
